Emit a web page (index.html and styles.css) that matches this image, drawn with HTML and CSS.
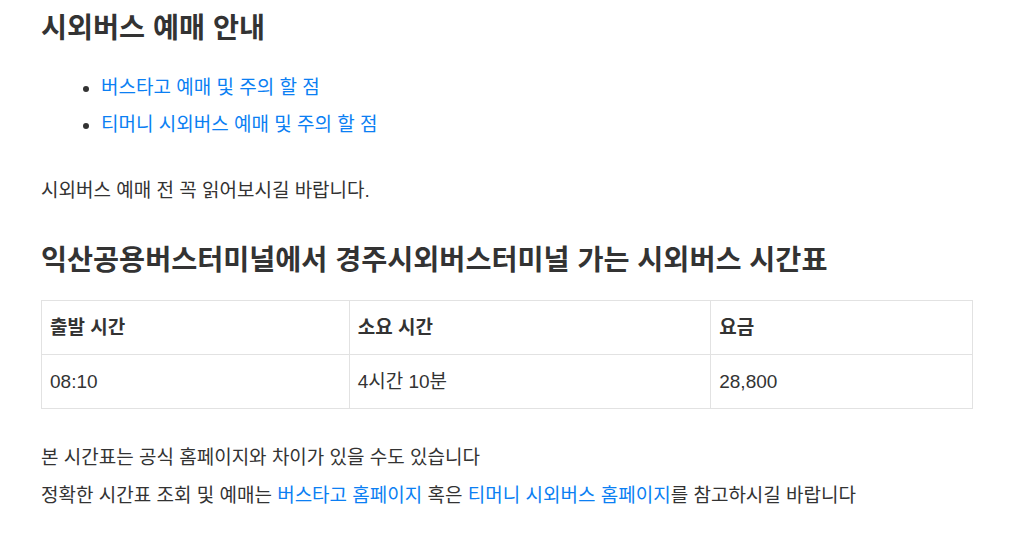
FILE: index.html
```html
<!DOCTYPE html>
<html lang="ko">
<head>
    <meta charset="UTF-8">
    <title>시외버스 예매 안내</title>
    <meta name="viewport" content="width=device-width, initial-scale=1">
    <link rel="stylesheet" href="styles.css">
</head>
<body>
    <div class="content">
        <h1>시외버스 예매 안내</h1>
        <ul class="guide-list">
            <li><a href="#">버스타고 예매 및 주의 할 점</a></li>
            <li><a href="#">티머니 시외버스 예매 및 주의 할 점</a></li>
        </ul>
        <p class="notice">시외버스 예매 전 꼭 읽어보시길 바랍니다.</p>

        <h2>익산공용버스터미널에서 경주시외버스터미널 가는 시외버스 시간표</h2>
        <table class="timetable">
            <colgroup>
                <col class="col-depart">
                <col class="col-duration">
                <col class="col-fare">
            </colgroup>
            <thead>
                <tr>
                    <th>출발 시간</th>
                    <th>소요 시간</th>
                    <th>요금</th>
                </tr>
            </thead>
            <tbody>
                <tr>
                    <td>08:10</td>
                    <td>4시간 10분</td>
                    <td>28,800</td>
                </tr>
            </tbody>
        </table>

        <p class="foot first">본 시간표는 공식 홈페이지와 차이가 있을 수도 있습니다</p>
        <p class="foot">정확한 시간표 조회 및 예매는 <a href="#">버스타고 홈페이지</a> 혹은 <a href="#">티머니 시외버스 홈페이지</a>를 참고하시길 바랍니다</p>
    </div>
</body>
</html>
```
FILE: styles.css
```css
body {
    font-family: 'Liberation Sans', 'Noto Sans CJK KR', sans-serif;
    background: #fff;
    color: #333;
    margin: 0;
    padding: 0;
}
.content {
    width: 932px;
    padding: 11px 0 0 41px;
}
h1, h2 {
    font-size: 28.3px;
    font-weight: 700;
    line-height: 34px;
    color: #333;
    margin: 0;
}
a {
    color: #0b7ff3;
    text-decoration: none;
}
.guide-list {
    margin: 24px 0 0 0;
    padding-left: 60px;
    font-size: 19px;
}
.guide-list li {
    line-height: 37px;
}
.notice {
    margin: 34px 0 0 0;
    font-size: 19px;
    line-height: 28px;
}
h2 {
    margin-top: 38px;
}
.timetable {
    width: 100%;
    margin-top: 23px;
    border-collapse: collapse;
    font-size: 19px;
}
.col-depart { width: 308px; }
.col-duration { width: 362px; }
.col-fare { width: 262px; }
.timetable th,
.timetable td {
    border: 1px solid #e2e2e2;
    padding: 14px 8px;
    line-height: 25px;
    text-align: left;
}
.timetable th {
    font-weight: 600;
}
.foot {
    margin: 10px 0 0 0;
    font-size: 19px;
    line-height: 28px;
}
.foot.first {
    margin-top: 35px;
}
```
